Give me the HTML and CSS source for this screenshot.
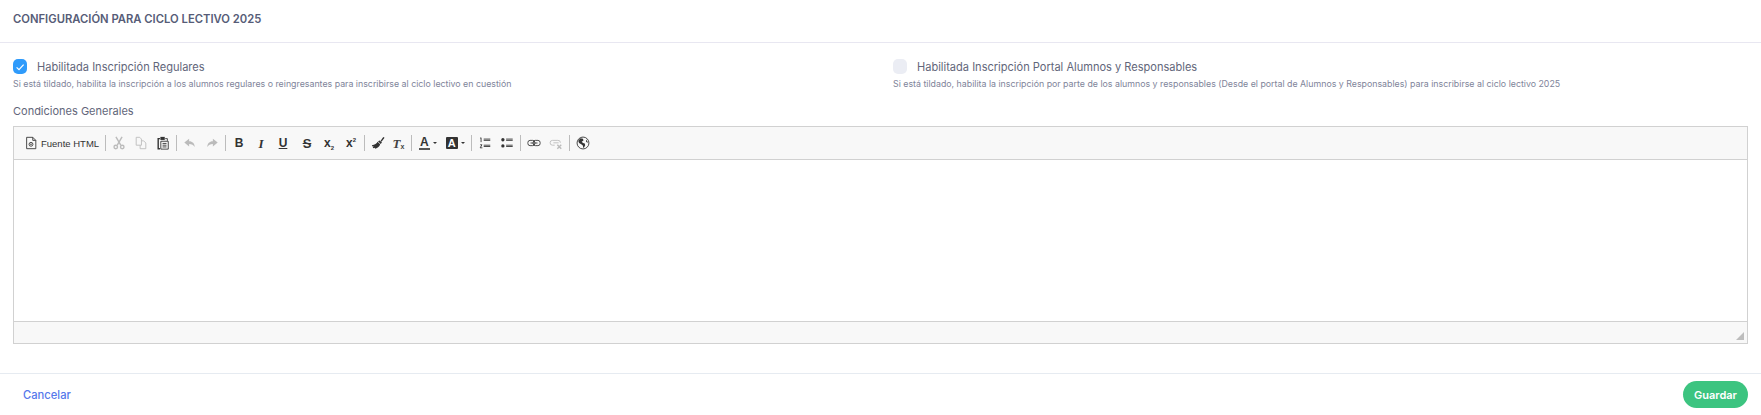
FILE: index.html
```html
<!DOCTYPE html>
<html lang="es">
<head>
<meta charset="utf-8">
<title>Configuración</title>
<link rel="stylesheet" href="styles.css">
</head>
<body>
<main class="panel">
  <header class="panel-head"><h1 class="panel-title">CONFIGURACIÓN PARA CICLO LECTIVO 2025</h1></header>
  <section class="panel-body">
    <div class="options">
      <div class="option">
        <label class="check-row">
          <span class="check check-on"><svg class="check-mark" viewBox="0 0 14 14"><path d="M3.600 7.300 6 9.700 10.600 4.600"/></svg></span>
          <span class="check-label">Habilitada Inscripción Regulares</span>
        </label>
        <p class="help">Si está tildado, habilita la inscripción a los alumnos regulares o reingresantes para inscribirse al ciclo lectivo en cuestión</p>
      </div>
      <div class="option">
        <label class="check-row">
          <span class="check check-off"></span>
          <span class="check-label">Habilitada Inscripción Portal Alumnos y Responsables</span>
        </label>
        <p class="help">Si está tildado, habilita la inscripción por parte de los alumnos y responsables (Desde el portal de Alumnos y Responsables) para inscribirse al ciclo lectivo 2025</p>
      </div>
    </div>
    <div class="field-label">Condiciones Generales</div>
    <div class="editor">
      <div class="toolbar">
        <span class="tb tb-source">
          <svg class="ico ico-doc" viewBox="0 0 16 16"><path class="ln" d="M3 1.500h7l3.500 3.500v9.500H3zM10 1.500V5h3.500"/><circle class="ln" cx="8" cy="9.500" r="2.200"/><circle class="fl" cx="8" cy="9.500" r=".9"/></svg>
          <span class="tb-text">Fuente HTML</span>
        </span>
        <i class="sep"></i>
        <span class="tb off"><svg class="ico" viewBox="0 0 16 16"><path class="ln2" d="M4.500 1 10 10.500M11.500 1 6 10.500"/><circle class="ln2" cx="4.300" cy="12.600" r="2"/><circle class="ln2" cx="11.700" cy="12.600" r="2"/></svg></span>
        <span class="tb off"><svg class="ico" viewBox="0 0 16 16"><path class="ln" d="M2.500 1.500h4l2 2v7h-6zM8.500 5.500h2.500l2.500 2.500v6.500H7v-4"/></svg></span>
        <span class="tb"><svg class="ico" viewBox="0 0 16 16"><path class="ln2" d="M4.500 3H2.500v11.500H4.500"/><path class="fl" d="M5 1h5v3.500H5z"/><path class="ln" d="M5.500 6h8.500v9H5.500z"/><path class="ln" d="M7.500 8.500h4.500M7.500 10.500h4.500M7.500 12.500h4.500"/><path class="ln" d="M10.500 3h2.500v2.500"/></svg></span>
        <i class="sep"></i>
        <span class="tb off"><svg class="ico" viewBox="0 0 16 16"><path class="fl" d="M7 3 1.500 7.500 7 12V9c3 0 5 1 6.500 3.500C13 8.500 11 6 7 6z"/></svg></span>
        <span class="tb off"><svg class="ico" viewBox="0 0 16 16"><path class="fl" d="M9 3l5.500 4.500L9 12V9c-3 0-5 1-6.500 3.500C3 8.500 5 6 9 6z"/></svg></span>
        <i class="sep"></i>
        <span class="tb glyph g-b">B</span>
        <span class="tb glyph g-i">I</span>
        <span class="tb glyph g-u">U</span>
        <span class="tb glyph g-s">S</span>
        <span class="tb glyph g-x"><span>x<sub class="g-small">2</sub></span></span>
        <span class="tb glyph g-x"><span>x<sup class="g-small">2</sup></span></span>
        <i class="sep"></i>
        <span class="tb tb-tight"><svg class="ico" viewBox="0 0 16 16"><path class="fl" d="M11 5.500 14 1l1.500 1-3.500 4.700zM10 5l2.500 2.500-1.500 1.500-3-3z"/><path class="fl" d="M7.500 6.500l3 3c-.5 2.500-3 4.500-5.500 5l-1-1-1 .5-1-1 1-1.500-1.500.5-.5-1.500C4.500 10 6.500 8.500 7.500 6.500z"/></svg></span>
        <span class="tb tb-tight glyph g-tx"><span>T<sub class="g-xs">x</sub></span></span>
        <i class="sep"></i>
        <span class="tb tb-wide"><span class="g-a">A</span><i class="caret"></i></span>
        <span class="tb tb-wide"><span class="g-abg">A</span><i class="caret"></i></span>
        <i class="sep"></i>
        <span class="tb"><svg class="ico" viewBox="0 0 16 16"><path class="ln" d="M6.500 3.500h7.500M6.500 5h7.500M6.500 10.500h7.500M6.500 12h7.500"/><path class="ln" d="M3.500 2v5M2.500 2.500l1-.5M2.500 10h2l-2 3.500h2.500"/></svg></span>
        <span class="tb"><svg class="ico" viewBox="0 0 16 16"><path class="ln" d="M7 3.500h7.500M7 5h7.500M7 10.500h7.500M7 12h7.500"/><circle class="fl" cx="3.300" cy="4.300" r="1.900"/><circle class="fl" cx="3.300" cy="11.300" r="1.900"/></svg></span>
        <i class="sep"></i>
        <span class="tb"><svg class="ico" viewBox="0 0 16 16"><rect class="ln" x="1" y="5" width="8" height="6" rx="2.500"/><rect class="ln" x="7" y="5" width="8" height="6" rx="2.500"/><path class="ln" d="M4 8h8"/></svg></span>
        <span class="tb off"><svg class="ico" viewBox="0 0 16 16"><path class="ln" d="M6.500 10.500H4a2.700 2.700 0 0 1 0-5.500h6a2.700 2.700 0 0 1 3 2.700M5 7.800h6"/><path class="ln2" d="M9.500 10 14 14.500M14 10l-4.500 4.500"/></svg></span>
        <i class="sep"></i>
        <span class="tb"><svg class="ico" viewBox="0 0 16 16"><circle class="ln" cx="8" cy="8" r="6.800"/><path class="fl" d="M5 2.500 8 3 8.500 5 6.500 6.500 8 8l2 .5.500 2-1.500 3-1-.5V11L6 9.500 3.500 8 2.500 5.500zM11.500 4l1.500 2 .5 2-2-1.500z"/></svg></span>
      </div>
      <div class="editor-area"></div>
      <div class="statusbar"><svg class="resizer" viewBox="0 0 9 9"><path d="M9 0v9H0z"/></svg></div>
    </div>
  </section>
  <footer class="panel-foot">
    <a class="link-cancel">Cancelar</a>
    <button class="btn-save">Guardar</button>
  </footer>
</main>
</body>
</html>
```
FILE: styles.css
```css
* { box-sizing: border-box; }
html, body { margin: 0; padding: 0; background: #fff; }
body { font-family: "Inter", "Liberation Sans", sans-serif; color: #595d6e; width: 1761px; height: 415px; overflow: hidden; }
.panel { display: flex; flex-direction: column; height: 415px; }
.panel-head { height: 43px; border-bottom: 1px solid #e8e7f1; display: flex; align-items: center; padding: 0 13px 4px; }
.panel-title { margin: 0; font-size: 11.250px; font-weight: 600; color: #565c77; letter-spacing: 0; }
.panel-body { padding: 16px 13px 0; flex: 1; }
.options { display: grid; grid-template-columns: 1fr 1fr; column-gap: 25px; }
.check-row { display: flex; align-items: center; height: 15px; }
.check { width: 14px; height: 15px; border-radius: 5px; flex: none; display: flex; align-items: center; justify-content: center; }
.check-on { background: #2f9bfb; }
.check-off { background: #ebedf4; }
.check-mark { width: 14px; height: 14px; fill: none; stroke: #fff; stroke-width: 1.200; }
.check-label { margin-left: 10px; font-size: 11.050px; color: #62667a; }
.help { margin: 4px 0 0; font-size: 8.820px; line-height: 12px; color: #80849a; }
.field-label { margin-top: 14px; font-size: 11px; line-height: 14px; color: #62667a; }
.editor { margin-top: 8px; border: 1px solid #d1d1d1; display: flex; flex-direction: column; height: 218px; }
.toolbar { height: 33px; background: #f8f8f8; border-bottom: 1px solid #d1d1d1; display: flex; align-items: center; padding-left: 9px; }
.tb { width: 22px; height: 22px; display: flex; align-items: center; justify-content: center; color: #333; flex: none; }
.tb-tight { width: 21px; }
.tb-source { width: 80px; padding-left: 1px; justify-content: flex-start; gap: 3px; }
.tb-text { font-family: "Liberation Sans", sans-serif; font-size: 9.500px; color: #333; white-space: nowrap; }
.tb-wide { width: 27.500px; gap: 3px; }
.off { opacity: .3; }
.sep { display: block; width: 1px; height: 16px; background: #bcbcbc; margin: 0 2px; flex: none; }
.ico { width: 14px; height: 14px; flex: none; }
.ln { fill: none; stroke: #333; stroke-width: 1; }
.ln2 { fill: none; stroke: #333; stroke-width: 1.600; }
.fl { fill: #333; }
.glyph { font-family: "Liberation Sans", sans-serif; font-weight: 700; font-size: 12px; line-height: 1; }
.g-i { font-family: "Liberation Serif", serif; font-style: italic; font-size: 13px; }
.g-u { text-decoration: underline; }
.g-s { text-decoration: line-through; font-size: 13px; margin-left: 2px; }
.g-x { font-size: 12px; }
.g-small { font-size: 6px; line-height: 0; }
.g-tx { font-family: "Liberation Serif", serif; font-style: italic; font-size: 13px; color: #444; }
.g-xs { font-family: "Liberation Sans", sans-serif; font-size: 7px; font-style: normal; line-height: 0; vertical-align: -1px; }
.g-a { font-family: "Liberation Sans", sans-serif; font-weight: 700; font-size: 12px; line-height: 12px; padding: 0 1px; border-bottom: 2px solid #555; }
.g-abg { font-family: "Liberation Sans", sans-serif; font-weight: 700; font-size: 11px; line-height: 12px; padding: 0 2px; background: #333; color: #fff; border-radius: 1px; }
.caret { display: block; width: 0; height: 0; border: 2px solid transparent; border-top: 2px solid #333; border-bottom: 0; }
.editor-area { flex: 1; background: #fff; }
.statusbar { height: 22px; background: #f8f8f8; border-top: 1px solid #d1d1d1; display: flex; justify-content: flex-end; align-items: flex-end; padding: 0 3px 3px 0; }
.resizer { width: 8px; height: 8px; fill: #bdbdbd; }
.panel-foot { height: 42px; margin-top: 0; border-top: 1px solid #e6ebf1; display: flex; align-items: center; justify-content: space-between; padding: 0 13px 0 23px; }
.link-cancel { font-size: 11.200px; font-weight: 500; color: #5578eb; }
.btn-save { width: 65px; height: 27px; border: 0; border-radius: 14px; background: #3cc480; color: #fff; font-family: "Inter", sans-serif; font-weight: 600; font-size: 11px; padding: 0; }
```
